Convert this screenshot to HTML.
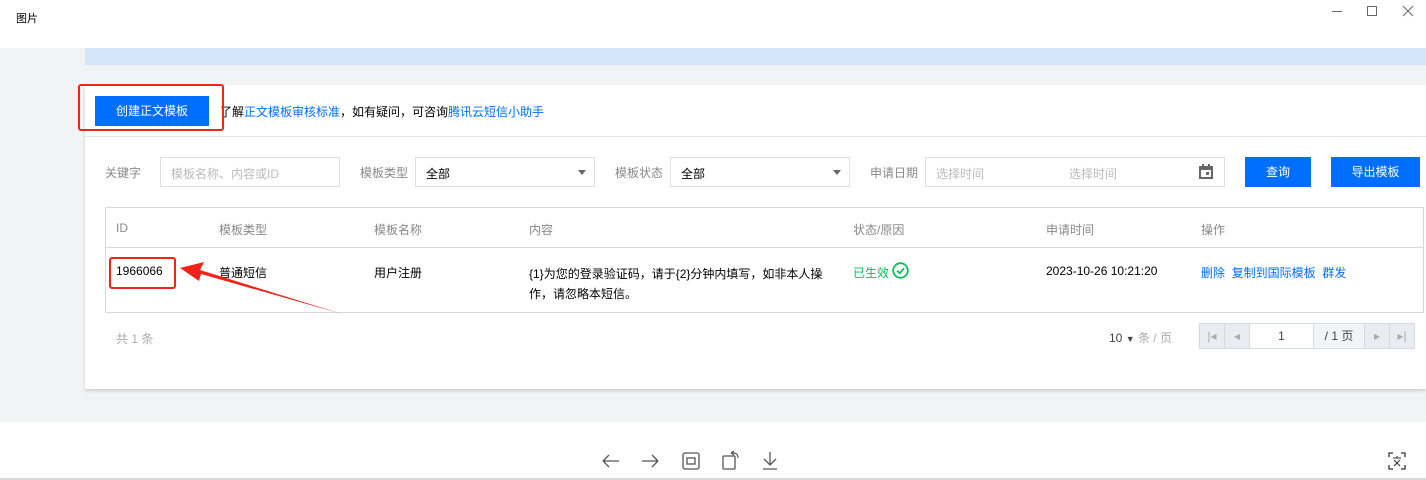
<!DOCTYPE html>
<html><head><meta charset="utf-8"><style>
*{box-sizing:border-box;margin:0;padding:0}
body{width:1426px;height:480px;overflow:hidden;background:#fff;font-family:"Liberation Sans","Noto Sans CJK SC",sans-serif;font-size:12px;color:#000;position:relative}
.a{position:absolute}
.gray{color:#888}
.blue{color:#006eff}
.inp{border:1px solid #dcdfe6;background:#fff;height:30px}
.btn{background:#006eff;color:#fff;text-align:center;line-height:30px;font-size:12px}
.pg{border:1px solid #d5d9e0;height:26px;top:323px;background:#e9ecf1;text-align:center;line-height:24px;color:#aaa}
</style></head><body>
<div class="a" style="left:16px;top:10px;font-size:11px">图片</div>
<div class="a" style="left:1332px;top:11px;width:10px;height:1px;background:#666"></div>
<div class="a" style="left:1367px;top:6px;width:10px;height:10px;border:1px solid #666"></div>
<svg class="a" style="left:1402px;top:5px" width="12" height="12"><path d="M1 1L11 11M11 1L1 11" stroke="#666" stroke-width="1"/></svg>

<div class="a" style="left:0;top:48px;width:1426px;height:374px;background:#f2f3f5"></div>
<div class="a" style="left:85px;top:48px;width:1341px;height:17px;background:#d5e6fb"></div>
<div class="a" style="left:85px;top:85px;width:1341px;height:304px;background:#fff;box-shadow:0 2px 3px rgba(0,0,0,.15)"></div>
<div class="a" style="left:85px;top:136px;width:1341px;height:1px;background:#e5e5e5"></div>

<div class="a btn" style="left:95px;top:96px;width:114px;height:30px">创建正文模板</div>
<div class="a" style="left:220px;top:103px">了解<span class="blue">正文模板审核标准</span>，如有疑问，可咨询<span class="blue">腾讯云短信小助手</span></div>

<div class="a gray" style="left:105px;top:164px">关键字</div>
<div class="a inp" style="left:160px;top:157px;width:180px;color:#bbb;padding:7px 10px">模板名称、内容或ID</div>
<div class="a gray" style="left:360px;top:164px">模板类型</div>
<div class="a inp" style="left:415px;top:157px;width:180px;padding:7px 10px">全部</div>
<div class="a" style="left:578px;top:170px;border:4px solid transparent;border-top:5px solid #666"></div>
<div class="a gray" style="left:615px;top:164px">模板状态</div>
<div class="a inp" style="left:670px;top:157px;width:180px;padding:7px 10px">全部</div>
<div class="a" style="left:833px;top:170px;border:4px solid transparent;border-top:5px solid #666"></div>
<div class="a gray" style="left:870px;top:164px">申请日期</div>
<div class="a inp" style="left:925px;top:157px;width:300px;color:#bbb;padding:7px 10px">选择时间<span style="position:absolute;left:143px">选择时间</span></div>
<svg class="a" style="left:1199px;top:164px" width="14" height="15"><rect x="0" y="2" width="14" height="13" fill="#666"/><rect x="2" y="6" width="10" height="7" fill="#fff"/><rect x="3" y="0" width="2" height="3" fill="#666"/><rect x="9" y="0" width="2" height="3" fill="#666"/><rect x="7" y="8" width="3" height="3" fill="#666"/></svg>
<div class="a btn" style="left:1245px;top:157px;width:66px">查询</div>
<div class="a btn" style="left:1331px;top:157px;width:89px">导出模板</div>

<div class="a" style="left:105px;top:207px;width:1319px;height:106px;border:1px solid #d5d9e0"></div>
<div class="a" style="left:105px;top:247px;width:1319px;height:1px;background:#d5d9e0"></div>
<div class="a gray" style="left:116px;top:221px">ID</div>
<div class="a gray" style="left:219px;top:221px">模板类型</div>
<div class="a gray" style="left:374px;top:221px">模板名称</div>
<div class="a gray" style="left:529px;top:221px">内容</div>
<div class="a gray" style="left:853px;top:221px">状态/原因</div>
<div class="a gray" style="left:1046px;top:221px">申请时间</div>
<div class="a gray" style="left:1201px;top:221px">操作</div>
<div class="a" style="left:116px;top:264px">1966066</div>
<div class="a" style="left:219px;top:264px">普通短信</div>
<div class="a" style="left:374px;top:264px">用户注册</div>
<div class="a" style="left:529px;top:264px;width:300px;line-height:20px">{1}为您的登录验证码，请于{2}分钟内填写，如非本人操作，请忽略本短信。</div>
<div class="a" style="left:853px;top:264px;color:#0abf5b">已生效</div>
<svg class="a" style="left:892px;top:262px" width="17" height="17"><circle cx="8.5" cy="8.5" r="7.3" fill="none" stroke="#0abf5b" stroke-width="1.8"/><path d="M5 8.7L7.7 11.2L12 6.3" fill="none" stroke="#0abf5b" stroke-width="1.8"/></svg>
<div class="a" style="left:1046px;top:264px">2023-10-26 10:21:20</div>
<div class="a blue" style="left:1201px;top:264px">删除&nbsp;&nbsp;复制到国际模板&nbsp;&nbsp;群发</div>

<div class="a gray" style="left:116px;top:330px;color:#aaa">共 1 条</div>
<div class="a" style="left:1109px;top:329px;color:#444">10 <span style="font-size:9px">▼</span> <span style="color:#aaa">条 / 页</span></div>
<div class="a pg" style="left:1199px;width:26px">|◂</div>
<div class="a pg" style="left:1224px;width:26px">◂</div>
<div class="a pg" style="left:1249px;width:65px;background:#fff;color:#444">1</div>
<div class="a pg" style="left:1313px;width:52px;background:#f2f4f7;color:#444">/ 1 页</div>
<div class="a pg" style="left:1364px;width:26px">▸</div>
<div class="a pg" style="left:1389px;width:26px">▸|</div>

<div class="a" style="left:78px;top:84px;width:146px;height:47px;border:2px solid #f0241a;border-radius:3px"></div>
<div class="a" style="left:109px;top:257px;width:67px;height:32px;border:2px solid #f0241a;border-radius:3px"></div>
<svg class="a" style="left:170px;top:255px" width="180" height="65"><path d="M342 314L200 270L204 262L180 268L199 281L201 274Z" transform="translate(-170,-255)" fill="#f0241a"/></svg>

<svg class="a" style="left:600px;top:450px" width="190" height="22">
<path d="M3 11H19M3 11L9 5M3 11L9 17" fill="none" stroke="#555" stroke-width="1.3"/>
<path d="M42 11H58M58 11L52 5M58 11L52 17" fill="none" stroke="#555" stroke-width="1.3"/>
<rect x="83" y="3" width="16" height="16" rx="2" fill="none" stroke="#555" stroke-width="1.3"/><rect x="87" y="8" width="8" height="6" fill="none" stroke="#555" stroke-width="1.3"/>
<rect x="123" y="6" width="12" height="13" rx="1" fill="none" stroke="#555" stroke-width="1.3"/><path d="M131 3Q138 2 138 8M131 3L134 1M131 3L134 5" fill="none" stroke="#555" stroke-width="1.2"/>
<path d="M170 2V15M164 9L170 15L176 9M163 19H177" fill="none" stroke="#555" stroke-width="1.3"/>
</svg>
<svg class="a" style="left:1388px;top:452px" width="18" height="18"><path d="M1 5V1H5M13 1H17V5M17 13V17H13M5 17H1V13" fill="none" stroke="#333" stroke-width="1.3"/><path d="M5 6H13M9 4V6M6 14L12 8M12 14L6 8" fill="none" stroke="#333" stroke-width="1.1"/></svg>
<div class="a" style="left:0;top:478px;width:1426px;height:2px;background:#d8d8d8"></div>
</body></html>
